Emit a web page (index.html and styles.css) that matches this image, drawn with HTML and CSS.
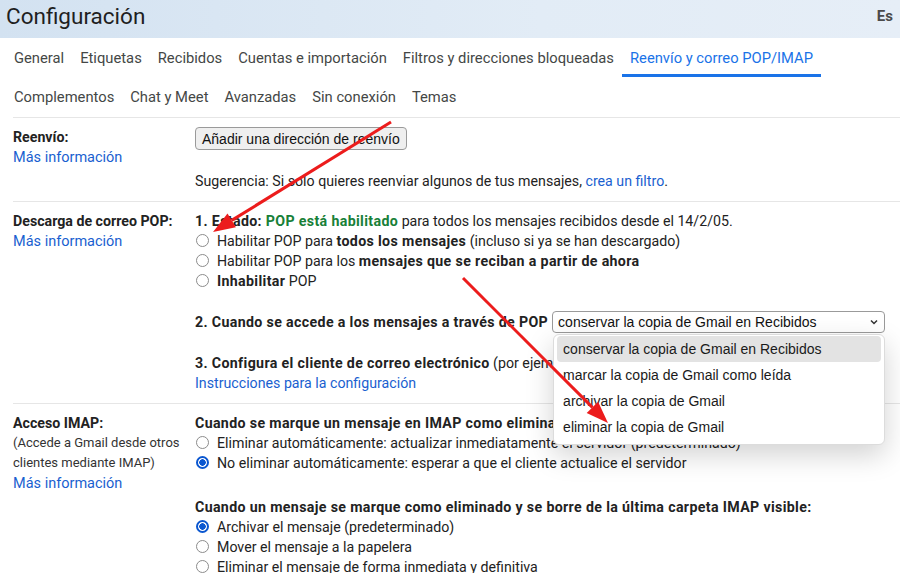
FILE: index.html
```html
<!DOCTYPE html>
<html lang="es">
<head>
    <meta charset="UTF-8">
    <meta name="viewport" content="width=device-width, initial-scale=1.0">
    <title>Configuración</title>
    <link rel="stylesheet" href="styles.css">
</head>
<body>
    <div class="topbar">
        <div class="page-title">Configuración</div>
        <div class="lang">Es</div>
    </div>
    <div class="tabs">
        <div class="tab-row">
            <div class="tab">General</div>
            <div class="tab">Etiquetas</div>
            <div class="tab">Recibidos</div>
            <div class="tab">Cuentas e importación</div>
            <div class="tab">Filtros y direcciones bloqueadas</div>
            <div class="tab active">Reenvío y correo POP/IMAP</div>
        </div>
        <div class="tab-row">
            <div class="tab">Complementos</div>
            <div class="tab">Chat y Meet</div>
            <div class="tab">Avanzadas</div>
            <div class="tab">Sin conexión</div>
            <div class="tab">Temas</div>
        </div>
    </div>

    <div class="settings">
        <div class="setting-row">
            <div class="setting-label">
                <div class="label-title">Reenvío:</div>
                <a class="link">Más información</a>
            </div>
            <div class="setting-body">
                <button class="mac-button">Añadir una dirección de reenvío</button>
                <div class="hint">Sugerencia: Si solo quieres reenviar algunos de tus mensajes, <a class="link">crea un filtro</a>.</div>
            </div>
        </div>

        <div class="setting-row">
            <div class="setting-label">
                <div class="label-title">Descarga de correo POP:</div>
                <a class="link">Más información</a>
            </div>
            <div class="setting-body">
                <div><b>1. Estado: <span class="ok">POP está habilitado</span></b> para todos los mensajes recibidos desde el 14/2/05.</div>
                <label class="radio"><span class="dot"></span>Habilitar POP para <b>todos los mensajes</b> (incluso si ya se han descargado)</label>
                <label class="radio"><span class="dot"></span>Habilitar POP para los <b>mensajes que se reciban a partir de ahora</b></label>
                <label class="radio"><span class="dot"></span><b>Inhabilitar</b> POP</label>

                <div class="step step-select">
                    <b>2. Cuando se accede a los mensajes a través de POP</b>
                    <div class="select-wrap">
                        <div class="mac-select">
                            <span>conservar la copia de Gmail en Recibidos</span>
                            <svg width="10" height="10" viewBox="0 0 10 10"><path d="M2 3.5 L5 6.5 L8 3.5" fill="none" stroke="#333" stroke-width="1.5"/></svg>
                        </div>
                        <div class="dropdown">
                            <div class="option hover">conservar la copia de Gmail en Recibidos</div>
                            <div class="option">marcar la copia de Gmail como leída</div>
                            <div class="option">archivar la copia de Gmail</div>
                            <div class="option">eliminar la copia de Gmail</div>
                        </div>
                    </div>
                </div>

                <div class="step">
                    <div class="nowrap"><b>3. Configura el cliente de correo electrónico</b> (por ejemplo, Outlook, Eudora)</div>
                    <a class="link">Instrucciones para la configuración</a>
                </div>
            </div>
        </div>

        <div class="setting-row last">
            <div class="setting-label">
                <div class="label-title">Acceso IMAP:</div>
                <div class="label-note">(Accede a Gmail desde otros clientes mediante IMAP)</div>
                <a class="link">Más información</a>
            </div>
            <div class="setting-body">
                <div><b>Cuando se marque un mensaje en IMAP como eliminado:</b></div>
                <label class="radio"><span class="dot"></span>Eliminar automáticamente: actualizar inmediatamente el servidor (predeterminado)</label>
                <label class="radio"><span class="dot on"></span>No eliminar automáticamente: esperar a que el cliente actualice el servidor</label>

                <div class="group">
                    <div><b>Cuando un mensaje se marque como eliminado y se borre de la última carpeta IMAP visible:</b></div>
                    <label class="radio"><span class="dot on"></span>Archivar el mensaje (predeterminado)</label>
                    <label class="radio"><span class="dot"></span>Mover el mensaje a la papelera</label>
                    <label class="radio"><span class="dot"></span>Eliminar el mensaje de forma inmediata y definitiva</label>
                </div>
            </div>
        </div>
    </div>

    <!-- red annotation arrows drawn over the screenshot -->
    <svg class="arrows" viewBox="0 0 900 573" width="900" height="573">
        <line x1="391" y1="122" x2="231.7" y2="220.4" stroke="#ec1c1c" stroke-width="3"/>
        <polygon points="213,232 235.9,227.2 227.5,213.6" fill="#ec1c1c"/>
        <line x1="463" y1="278" x2="592.4" y2="407.4" stroke="#ec1c1c" stroke-width="3"/>
        <polygon points="608,423 586.7,413.1 598.1,401.8" fill="#ec1c1c"/>
    </svg>
</body>
</html>
```

FILE: styles.css
```css
html, body {
    height: 100%;
}
body {
    margin: 0;
    padding: 0;
    font-family: Roboto, "Liberation Sans", Arial, sans-serif;
    font-size: 14.2px;
    color: #222;
    background-color: #FFFFFF;
    overflow: hidden;
    position: relative;
}
b {
    font-weight: 700;
    letter-spacing: 0.35px;
}
.topbar {
    height: 38px;
    box-sizing: border-box;
    display: flex;
    align-items: center;
    justify-content: space-between;
    padding: 0 7px 7px 6px;
    background: linear-gradient(to right, #d3e2f1, #e2ecf6 60%, #e6eef7);
}
.page-title {
    font-size: 22.5px;
    color: #1f1f1f;
}
.lang {
    font-size: 15px;
    font-weight: bold;
    color: #4a4a4a;
}
.tabs {
    padding-left: 6px;
}
.tab-row {
    display: flex;
    height: 39px;
}
.tab {
    font-size: 14.75px;
    color: #444746;
    padding: 3px 8px 0 8px;
    display: flex;
    align-items: center;
    box-sizing: border-box;
    border-bottom: 3px solid transparent;
}
.tab.active {
    color: #1a73e8;
    border-bottom-color: #1a73e8;
}
.settings {
    margin-left: 13px;
    margin-top: 1px;
    border-top: 1px solid #e6e6e6;
}
.setting-row {
    display: grid;
    grid-template-columns: 182px 1fr;
    padding: 9px 0 10px 0;
    border-bottom: 1px solid #e6e6e6;
    line-height: 20px;
}
.setting-row.last {
    border-bottom: none;
}
.label-title {
    font-weight: bold;
}
.label-note {
    font-size: 13px;
    color: #333;
    width: 170px;
}
.link {
    color: #1a5fd0;
    cursor: pointer;
}
.setting-label .link {
    font-size: 14.5px;
}
.ok {
    color: #188038;
}
.nowrap {
    white-space: nowrap;
}
.mac-button {
    font-family: "Liberation Sans", Arial, sans-serif;
    font-size: 14px;
    color: #111;
    background-color: #efefef;
    border: 1px solid #9a9a9a;
    border-radius: 4px;
    height: 23px;
    padding: 0 6px;
    display: block;
}
.hint {
    margin-top: 21px;
}
.radio {
    display: block;
    color: #222;
    white-space: nowrap;
}
.dot {
    display: inline-block;
    vertical-align: -1px;
    width: 13px;
    height: 13px;
    border: 1px solid #8c8c8c;
    border-radius: 50%;
    margin: 0 8px 0 1px;
    box-sizing: border-box;
    background: #FFFFFF;
}
.dot.on {
    border: 2px solid #0b57d0;
    background: radial-gradient(circle, #0b57d0 0 3px, #FFFFFF 3.5px);
}
.step {
    margin-top: 20px;
}
.step-select {
    display: flex;
    align-items: center;
    height: 22px;
}
.select-wrap {
    position: relative;
    margin-left: 4px;
    width: 333px;
    flex: none;
}
.mac-select {
    font-family: "Liberation Sans", Arial, sans-serif;
    font-size: 14px;
    height: 22px;
    box-sizing: border-box;
    border: 1px solid #9a9a9a;
    border-radius: 4px;
    display: flex;
    align-items: center;
    justify-content: space-between;
    padding: 0 5px 0 5px;
    color: #111;
    background: #FFFFFF;
}
.dropdown {
    position: absolute;
    top: 23px;
    left: 1px;
    right: 0;
    z-index: 5;
    background: #FFFFFF;
    border: 1px solid #dcdcdc;
    border-radius: 6px;
    box-shadow: 0 10px 28px rgba(0, 0, 0, 0.18);
    padding: 1px 3px 4px 3px;
    font-family: "Liberation Sans", Arial, sans-serif;
    font-size: 14px;
}
.option {
    height: 26px;
    line-height: 26px;
    padding: 0 6px;
    color: #1a1a1a;
    border-radius: 4px;
}
.option.hover {
    background-color: #e3e3e3;
}
.group {
    margin-top: 24px;
}
.arrows {
    position: absolute;
    top: 0;
    left: 0;
    pointer-events: none;
    z-index: 10;
}
```
